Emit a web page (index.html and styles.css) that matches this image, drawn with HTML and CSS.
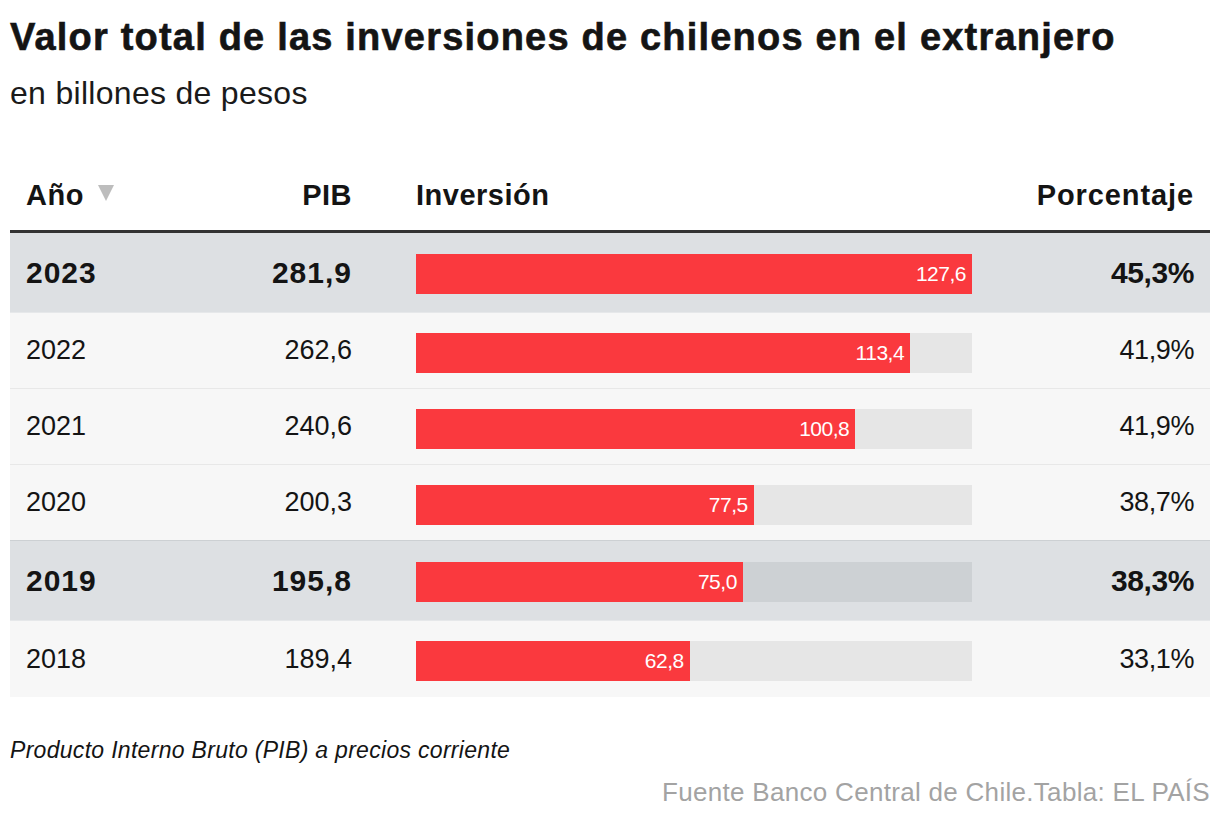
FILE: index.html
```html
<!DOCTYPE html>
<html lang="es">
<head>
<meta charset="utf-8">
<title>Valor total de las inversiones de chilenos en el extranjero</title>
<link rel="stylesheet" href="styles.css">
</head>
<body>
<div class="page">
  <h1 class="title">Valor total de las inversiones de chilenos en el extranjero</h1>
  <p class="subtitle">en billones de pesos</p>

  <div class="table">
    <div class="row head">
      <div class="c-year">Año <span class="sort"></span></div>
      <div class="c-pib">PIB</div>
      <div class="c-inv">Inversión</div>
      <div class="c-pct">Porcentaje</div>
    </div>

    <div class="row hl">
      <div class="c-year">2023</div>
      <div class="c-pib">281,9</div>
      <div class="c-inv"><div class="track"><div class="bar" style="width:100%"><span>127,6</span></div></div></div>
      <div class="c-pct">45,3%</div>
    </div>
    <div class="row">
      <div class="c-year">2022</div>
      <div class="c-pib">262,6</div>
      <div class="c-inv"><div class="track"><div class="bar" style="width:88.87%"><span>113,4</span></div></div></div>
      <div class="c-pct">41,9%</div>
    </div>
    <div class="row">
      <div class="c-year">2021</div>
      <div class="c-pib">240,6</div>
      <div class="c-inv"><div class="track"><div class="bar" style="width:79.0%"><span>100,8</span></div></div></div>
      <div class="c-pct">41,9%</div>
    </div>
    <div class="row pre-hl">
      <div class="c-year">2020</div>
      <div class="c-pib">200,3</div>
      <div class="c-inv"><div class="track"><div class="bar" style="width:60.74%"><span>77,5</span></div></div></div>
      <div class="c-pct">38,7%</div>
    </div>
    <div class="row hl">
      <div class="c-year">2019</div>
      <div class="c-pib">195,8</div>
      <div class="c-inv"><div class="track"><div class="bar" style="width:58.78%"><span>75,0</span></div></div></div>
      <div class="c-pct">38,3%</div>
    </div>
    <div class="row last">
      <div class="c-year">2018</div>
      <div class="c-pib">189,4</div>
      <div class="c-inv"><div class="track"><div class="bar" style="width:49.22%"><span>62,8</span></div></div></div>
      <div class="c-pct">33,1%</div>
    </div>
  </div>

  <p class="note">Producto Interno Bruto (PIB) a precios corriente</p>
  <p class="source">Fuente Banco Central de Chile.Tabla: EL PAÍS</p>
</div>
</body>
</html>
```

FILE: styles.css
```css
* { box-sizing: border-box; }

html, body {
  margin: 0;
  padding: 0;
  background: #ffffff;
}

body {
  font-family: "Liberation Sans", Arial, sans-serif;
  color: #141414;
}

.page {
  width: 1220px;
  padding: 0 10px;
}

.title {
  margin: 0;
  padding-top: 14px;
  font-size: 38px;
  line-height: 46px;
  font-weight: 700;
  letter-spacing: 1.2px;
  -webkit-text-stroke: 0.6px #141414;
  color: #141414;
}

.subtitle {
  margin: 0;
  padding-top: 16px;
  font-size: 32px;
  line-height: 34px;
  letter-spacing: 0.3px;
  color: #1a1a1a;
}

.table {
  margin-top: 47px;
}

.row {
  display: grid;
  grid-template-columns: 160px 166px 620px 222px;
  align-items: center;
  padding: 0 16px;
  background: #f7f7f7;
  height: 76px;
  border-bottom: 1px solid #e8e8e8;
  font-size: 27px;
}

.row .c-inv { margin-left: 64px; }

.c-pib, .c-pct { text-align: right; }
.c-pct { letter-spacing: -0.4px; }

.row.head {
  background: #ffffff;
  height: 76px;
  border-bottom: 3px solid #333333;
  font-weight: 700;
  font-size: 29px;
  letter-spacing: 0.5px;
  align-items: end;
  padding-bottom: 18px;
}

.row.head .c-pct { letter-spacing: 0.9px; }

.sort {
  display: inline-block;
  width: 0;
  height: 0;
  margin-left: 6px;
  border-left: 8px solid transparent;
  border-right: 8px solid transparent;
  border-top: 16px solid #bdbdbd;
  vertical-align: 4px;
}

.row.hl {
  background: #dde0e3;
  height: 80px;
  font-weight: 700;
  font-size: 30px;
  letter-spacing: 1px;
  border-bottom: 1px solid #e6e8ea;
}

.row.hl .c-pct { letter-spacing: -0.4px; }

.row.pre-hl { border-bottom: 1px solid #ccd0d3; }
.row.last { border-bottom: none; }

.track {
  height: 40px;
  width: 556px;
  background: #e6e6e6;
  margin-top: 4px;
}

.row.hl .track { background: #cdd1d4; margin-top: 2px; }

.bar {
  height: 40px;
  background: #fa393e;
  display: flex;
  align-items: center;
  justify-content: flex-end;
  padding-right: 6px;
}

.bar span {
  color: #ffffff;
  font-size: 21px;
  font-weight: 400;
  letter-spacing: -0.5px;
}

.note {
  margin: 40px 0 0;
  font-size: 23px;
  line-height: 26px;
  letter-spacing: 0.3px;
  font-style: italic;
  color: #141414;
}

.source {
  margin: 14px 0 0;
  text-align: right;
  font-size: 26px;
  line-height: 30px;
  letter-spacing: 0.3px;
  color: #a3a3a3;
}
```
